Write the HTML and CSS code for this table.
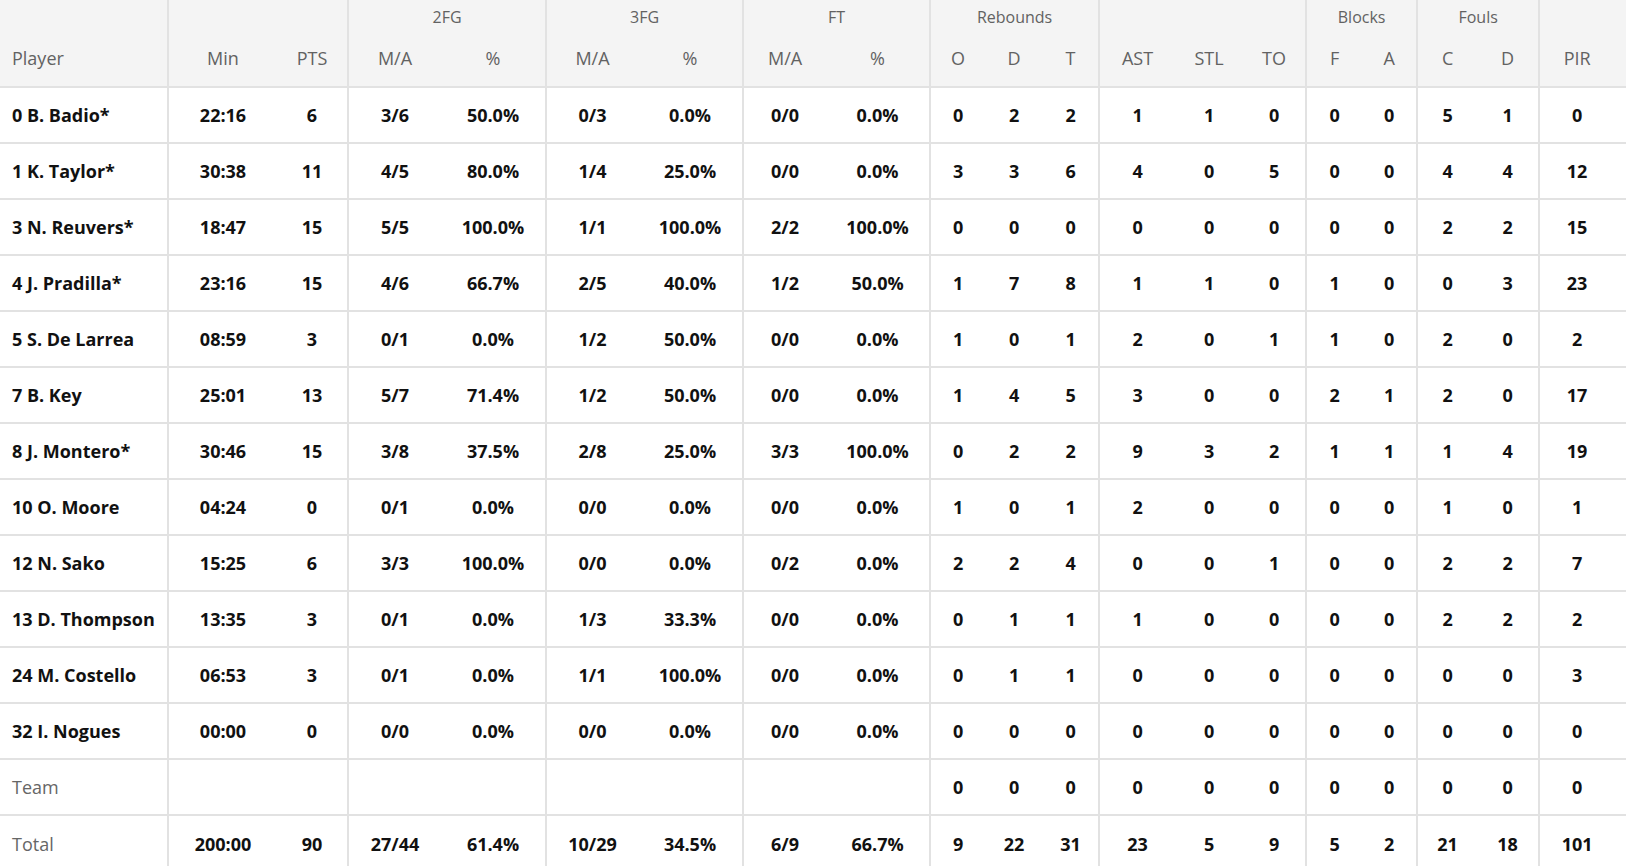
FILE: index.html
```html
<!DOCTYPE html>
<html lang="en">
<head>
<meta charset="utf-8">
<title>Box score</title>
<link rel="stylesheet" href="styles.css">
</head>
<body>
<table class="box">
  <colgroup>
    <col class="c-player">
    <col class="c-min"><col class="c-pts">
    <col class="c-2ma"><col class="c-2p">
    <col class="c-3ma"><col class="c-3p">
    <col class="c-fma"><col class="c-fp">
    <col class="c-ro"><col class="c-rd"><col class="c-rt">
    <col class="c-ast"><col class="c-stl"><col class="c-to">
    <col class="c-bf"><col class="c-ba">
    <col class="c-fc"><col class="c-fd">
    <col class="c-pir">
  </colgroup>
  <thead>
    <tr class="grp">
      <th class="end"></th>
      <th colspan="2" class="end"></th>
      <th colspan="2" class="end">2FG</th>
      <th colspan="2" class="end">3FG</th>
      <th colspan="2" class="end">FT</th>
      <th colspan="3" class="end">Rebounds</th>
      <th colspan="3" class="end"></th>
      <th colspan="2" class="end">Blocks</th>
      <th colspan="2" class="end">Fouls</th>
      <th class="pir"></th>
    </tr>
    <tr class="sub">
      <th class="name end">Player</th>
      <th>Min</th><th class="end">PTS</th>
      <th>M/A</th><th class="end">%</th>
      <th>M/A</th><th class="end">%</th>
      <th>M/A</th><th class="end">%</th>
      <th>O</th><th>D</th><th class="end">T</th>
      <th>AST</th><th>STL</th><th class="end">TO</th>
      <th>F</th><th class="end">A</th>
      <th>C</th><th class="end">D</th>
      <th class="pir">PIR</th>
    </tr>
  </thead>
  <tbody>
    <tr><td class="name end">0 B. Badio*</td><td>22:16</td><td class="end">6</td><td>3/6</td><td class="end">50.0%</td><td>0/3</td><td class="end">0.0%</td><td>0/0</td><td class="end">0.0%</td><td>0</td><td>2</td><td class="end">2</td><td>1</td><td>1</td><td class="end">0</td><td>0</td><td class="end">0</td><td>5</td><td class="end">1</td><td class="pir">0</td></tr>
    <tr><td class="name end">1 K. Taylor*</td><td>30:38</td><td class="end">11</td><td>4/5</td><td class="end">80.0%</td><td>1/4</td><td class="end">25.0%</td><td>0/0</td><td class="end">0.0%</td><td>3</td><td>3</td><td class="end">6</td><td>4</td><td>0</td><td class="end">5</td><td>0</td><td class="end">0</td><td>4</td><td class="end">4</td><td class="pir">12</td></tr>
    <tr><td class="name end">3 N. Reuvers*</td><td>18:47</td><td class="end">15</td><td>5/5</td><td class="end">100.0%</td><td>1/1</td><td class="end">100.0%</td><td>2/2</td><td class="end">100.0%</td><td>0</td><td>0</td><td class="end">0</td><td>0</td><td>0</td><td class="end">0</td><td>0</td><td class="end">0</td><td>2</td><td class="end">2</td><td class="pir">15</td></tr>
    <tr><td class="name end">4 J. Pradilla*</td><td>23:16</td><td class="end">15</td><td>4/6</td><td class="end">66.7%</td><td>2/5</td><td class="end">40.0%</td><td>1/2</td><td class="end">50.0%</td><td>1</td><td>7</td><td class="end">8</td><td>1</td><td>1</td><td class="end">0</td><td>1</td><td class="end">0</td><td>0</td><td class="end">3</td><td class="pir">23</td></tr>
    <tr><td class="name end">5 S. De Larrea</td><td>08:59</td><td class="end">3</td><td>0/1</td><td class="end">0.0%</td><td>1/2</td><td class="end">50.0%</td><td>0/0</td><td class="end">0.0%</td><td>1</td><td>0</td><td class="end">1</td><td>2</td><td>0</td><td class="end">1</td><td>1</td><td class="end">0</td><td>2</td><td class="end">0</td><td class="pir">2</td></tr>
    <tr><td class="name end">7 B. Key</td><td>25:01</td><td class="end">13</td><td>5/7</td><td class="end">71.4%</td><td>1/2</td><td class="end">50.0%</td><td>0/0</td><td class="end">0.0%</td><td>1</td><td>4</td><td class="end">5</td><td>3</td><td>0</td><td class="end">0</td><td>2</td><td class="end">1</td><td>2</td><td class="end">0</td><td class="pir">17</td></tr>
    <tr><td class="name end">8 J. Montero*</td><td>30:46</td><td class="end">15</td><td>3/8</td><td class="end">37.5%</td><td>2/8</td><td class="end">25.0%</td><td>3/3</td><td class="end">100.0%</td><td>0</td><td>2</td><td class="end">2</td><td>9</td><td>3</td><td class="end">2</td><td>1</td><td class="end">1</td><td>1</td><td class="end">4</td><td class="pir">19</td></tr>
    <tr><td class="name end">10 O. Moore</td><td>04:24</td><td class="end">0</td><td>0/1</td><td class="end">0.0%</td><td>0/0</td><td class="end">0.0%</td><td>0/0</td><td class="end">0.0%</td><td>1</td><td>0</td><td class="end">1</td><td>2</td><td>0</td><td class="end">0</td><td>0</td><td class="end">0</td><td>1</td><td class="end">0</td><td class="pir">1</td></tr>
    <tr><td class="name end">12 N. Sako</td><td>15:25</td><td class="end">6</td><td>3/3</td><td class="end">100.0%</td><td>0/0</td><td class="end">0.0%</td><td>0/2</td><td class="end">0.0%</td><td>2</td><td>2</td><td class="end">4</td><td>0</td><td>0</td><td class="end">1</td><td>0</td><td class="end">0</td><td>2</td><td class="end">2</td><td class="pir">7</td></tr>
    <tr><td class="name end">13 D. Thompson</td><td>13:35</td><td class="end">3</td><td>0/1</td><td class="end">0.0%</td><td>1/3</td><td class="end">33.3%</td><td>0/0</td><td class="end">0.0%</td><td>0</td><td>1</td><td class="end">1</td><td>1</td><td>0</td><td class="end">0</td><td>0</td><td class="end">0</td><td>2</td><td class="end">2</td><td class="pir">2</td></tr>
    <tr><td class="name end">24 M. Costello</td><td>06:53</td><td class="end">3</td><td>0/1</td><td class="end">0.0%</td><td>1/1</td><td class="end">100.0%</td><td>0/0</td><td class="end">0.0%</td><td>0</td><td>1</td><td class="end">1</td><td>0</td><td>0</td><td class="end">0</td><td>0</td><td class="end">0</td><td>0</td><td class="end">0</td><td class="pir">3</td></tr>
    <tr><td class="name end">32 I. Nogues</td><td>00:00</td><td class="end">0</td><td>0/0</td><td class="end">0.0%</td><td>0/0</td><td class="end">0.0%</td><td>0/0</td><td class="end">0.0%</td><td>0</td><td>0</td><td class="end">0</td><td>0</td><td>0</td><td class="end">0</td><td>0</td><td class="end">0</td><td>0</td><td class="end">0</td><td class="pir">0</td></tr>
    <tr><td class="name label end">Team</td><td></td><td class="end"></td><td></td><td class="end"></td><td></td><td class="end"></td><td></td><td class="end"></td><td>0</td><td>0</td><td class="end">0</td><td>0</td><td>0</td><td class="end">0</td><td>0</td><td class="end">0</td><td>0</td><td class="end">0</td><td class="pir">0</td></tr>
    <tr class="total"><td class="name label end">Total</td><td>200:00</td><td class="end">90</td><td>27/44</td><td class="end">61.4%</td><td>10/29</td><td class="end">34.5%</td><td>6/9</td><td class="end">66.7%</td><td>9</td><td>22</td><td class="end">31</td><td>23</td><td>5</td><td class="end">9</td><td>5</td><td class="end">2</td><td>21</td><td class="end">18</td><td class="pir">101</td></tr>
  </tbody>
</table>
</body>
</html>
```
FILE: styles.css
```css
html, body {
  margin: 0;
  padding: 0;
  background: #ffffff;
}

body {
  font-family: "Open Sans", "Noto Sans", "Liberation Sans", sans-serif;
  overflow: hidden;
}

.box {
  width: 1626px;
  table-layout: fixed;
  border-collapse: separate;
  border-spacing: 0;
}

.c-player { width: 169px; }
.c-min { width: 108px; }
.c-pts { width: 72px; }
.c-2ma { width: 92px; }
.c-2p { width: 106px; }
.c-3ma { width: 91px; }
.c-3p { width: 106px; }
.c-fma { width: 82px; }
.c-fp { width: 105px; }
.c-ro { width: 54px; }
.c-rd { width: 58px; }
.c-rt { width: 57px; }
.c-ast { width: 75px; }
.c-stl { width: 68px; }
.c-to { width: 64px; }
.c-bf { width: 55px; }
.c-ba { width: 56px; }
.c-fc { width: 59px; }
.c-fd { width: 63px; }
.c-pir { width: 86px; }

.box th,
.box td {
  padding: 0;
  text-align: center;
  white-space: nowrap;
}

.box thead th {
  background: #f4f4f4;
  color: #626262;
  font-weight: 400;
}

.box .end {
  border-right: 2px solid #e2e2e2;
}

.grp {
  height: 33px;
}

.grp th {
  font-size: 16px;
  color: #6a6a6a;
  vertical-align: middle;
  padding-top: 1px;
}

.sub {
  height: 55px;
}

.sub th {
  font-size: 18px;
  vertical-align: middle;
  padding-bottom: 4px;
  border-bottom: 2px solid #e2e2e2;
}

.box tbody tr {
  height: 56px;
}

.box tbody td {
  font-size: 18px;
  font-weight: 700;
  color: #111111;
  border-bottom: 2px solid #e2e2e2;
  vertical-align: middle;
}

.box .name {
  text-align: left;
  padding-left: 12px;
}

.box tbody td.label {
  font-weight: 400;
  color: #666666;
}

.box .pir {
  padding-right: 12px;
}

.box tbody tr.total td {
  border-bottom: none;
}
```
